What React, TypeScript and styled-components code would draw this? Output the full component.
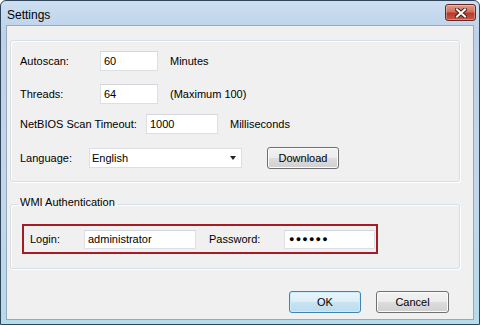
import React from "react";
import styled, { createGlobalStyle } from "styled-components";

const GlobalStyle = createGlobalStyle`
  html, body {
    margin: 0;
    padding: 0;
    background: #ffffff;
  }
  body {
    font-family: "Liberation Sans", Arial, sans-serif;
    font-size: 11px;
    color: #000;
  }
  * {
    box-sizing: border-box;
  }
`;

const App = () => {
  return (
    <>
      <GlobalStyle />
      <Window>
        <TitleBar>
          <Title>Settings</Title>
          <CloseButton aria-label="Close">
            <svg width="12" height="10" viewBox="0 0 12 10">
              <path d="M2 1.5 L10 8.5 M10 1.5 L2 8.5" stroke="#4a1f1a" strokeWidth="4" strokeLinecap="square" />
              <path d="M2 1.5 L10 8.5 M10 1.5 L2 8.5" stroke="#ffffff" strokeWidth="2" strokeLinecap="square" />
            </svg>
          </CloseButton>
        </TitleBar>

        <Client>
          <Group $height={142} $padding="10px 0 0 9px">
            <Row $top={0}>
              <Label $width={80}>Autoscan:</Label>
              <Field $width={58} defaultValue="60" readOnly />
              <Hint>Minutes</Hint>
            </Row>
            <Row $top={13}>
              <Label $width={80}>Threads:</Label>
              <Field $width={58} defaultValue="64" readOnly />
              <Hint>(Maximum 100)</Hint>
            </Row>
            <Row $top={10}>
              <Label $width={126}>NetBIOS Scan Timeout:</Label>
              <Field $width={72} defaultValue="1000" readOnly />
              <Hint>Milliseconds</Hint>
            </Row>
            <Row $top={13} $height={22}>
              <Label $width={69}>Language:</Label>
              <DropDown>
                <span>English</span>
                <svg width="6" height="4" viewBox="0 0 6 4">
                  <path d="M0 0 H6 L3 4 Z" fill="#222" />
                </svg>
              </DropDown>
              <PushButton $width={72} $left={25}>
                Download
              </PushButton>
            </Row>
          </Group>

          <Group $top={12} $padding="10px 0 14px 11px">
            <Legend>WMI Authentication</Legend>
            <Highlight>
              <Label $width={54}>Login:</Label>
              <Field $width={112} $height={19} defaultValue="administrator" readOnly />
              <Label $width={75} $left={13}>
                Password:
              </Label>
              <Secret $width={91} $height={19} defaultValue="●●●●●●" readOnly />
            </Highlight>
          </Group>

          <Footer>
            <PushButton $width={72} $primary>
              OK
            </PushButton>
            <PushButton $width={73}>Cancel</PushButton>
          </Footer>
        </Client>
      </Window>
    </>
  );
};

const Window = styled.div`
  width: 480px;
  height: 325px;
  border: 1px solid #30445a;
  border-radius: 6px 6px 0 0;
  background: linear-gradient(
    180deg,
    #cddff1 0%,
    #bcd2ea 10%,
    #c3d7ec 60%,
    #b4dcea 100%
  );
  display: flex;
  flex-direction: column;
  overflow: hidden;
`;

const TitleBar = styled.div`
  height: 24px;
  display: flex;
  align-items: flex-start;
  justify-content: space-between;
  padding: 0 3px 0 6px;
`;

const Title = styled.span`
  font-size: 12px;
  line-height: 14px;
  margin-top: 7px;
  color: #000;
`;

const CloseButton = styled.button`
  width: 31px;
  height: 17px;
  margin-top: 3px;
  padding: 0;
  border: 1px solid #6a2620;
  border-radius: 3px;
  background: linear-gradient(
    180deg,
    #e09d8b 0%,
    #d0705d 45%,
    #b8392c 55%,
    #c9584a 100%
  );
  box-shadow: inset 0 0 0 1px rgba(255, 255, 255, 0.3);
  display: flex;
  align-items: center;
  justify-content: center;
`;

const Client = styled.div`
  flex: 1;
  margin: 0 5px 4px 5px;
  border: 1px solid #99a9ba;
  background: #f0f0f0;
  display: flex;
  flex-direction: column;
  padding: 14px 13px 0 3px;
`;

const Group = styled.fieldset<{ $height?: number; $top?: number; $padding: string }>`
  margin: ${({ $top }) => $top || 0}px 0 0 0;
  min-width: 0;
  height: ${({ $height }) => ($height ? `${$height}px` : "auto")};
  padding: ${({ $padding }) => $padding};
  border: 1px solid #d5dfe5;
  border-radius: 3px;
  box-shadow: inset 1px 1px 0 #ffffff, 1px 1px 0 #ffffff;
  display: flex;
  flex-direction: column;
`;

const Legend = styled.legend`
  margin-left: -4px;
  padding: 2px 2px 5px 2px;
  line-height: 13px;
  color: #000;
`;

const Row = styled.div<{ $top: number; $height?: number }>`
  display: flex;
  align-items: center;
  height: ${({ $height }) => $height || 20}px;
  margin-top: ${({ $top }) => $top}px;
`;

const Label = styled.span<{ $width: number; $left?: number }>`
  flex: none;
  width: ${({ $width }) => $width}px;
  margin-left: ${({ $left }) => $left || 0}px;
  white-space: nowrap;
`;

const Hint = styled.span`
  margin-left: 12px;
  white-space: nowrap;
`;

const Field = styled.input<{ $width: number; $height?: number }>`
  flex: none;
  width: ${({ $width }) => $width}px;
  height: ${({ $height }) => $height || 20}px;
  margin: 0;
  padding: 0 3px;
  border: 1px solid #dcdfe4;
  border-top-color: #d2d6dc;
  background: #ffffff;
  font-family: inherit;
  font-size: 11px;
  color: #000;
  outline: none;
`;

const Secret = styled(Field)`
  font-size: 9px;
  letter-spacing: 1.2px;
  padding-left: 4px;
`;

const DropDown = styled.div`
  flex: none;
  width: 153px;
  height: 20px;
  background: #ffffff;
  border: 1px solid #dcdfe4;
  padding: 0 5px 0 2px;
  display: flex;
  align-items: center;
  justify-content: space-between;
`;

const PushButton = styled.button<{ $width: number; $left?: number; $primary?: boolean }>`
  flex: none;
  width: ${({ $width }) => $width}px;
  height: 22px;
  margin: 0 0 0 ${({ $left }) => $left || 0}px;
  padding: 0;
  border: 1px solid ${({ $primary }) => ($primary ? "#3d86b4" : "#707070")};
  border-radius: 3px;
  background: ${({ $primary }) =>
    $primary
      ? "linear-gradient(180deg, #eaf5fb 0%, #dcedf7 50%, #c9e3f2 51%, #bcdcef 100%)"
      : "linear-gradient(180deg, #f2f2f2 0%, #ebebeb 50%, #dddddd 51%, #cfcfcf 100%)"};
  box-shadow: inset 0 0 0 1px ${({ $primary }) => ($primary ? "#c8ecfb" : "#fbfbfb")};
  font-family: inherit;
  font-size: 11px;
  color: #000;
`;

const Highlight = styled.div`
  width: 356px;
  height: 30px;
  border: 2px solid #a51c25;
  padding-left: 6px;
  display: flex;
  align-items: center;
`;

const Footer = styled.div`
  display: flex;
  justify-content: flex-end;
  gap: 15px;
  margin-top: 22px;
  padding-right: 11px;
`;

export default App;
